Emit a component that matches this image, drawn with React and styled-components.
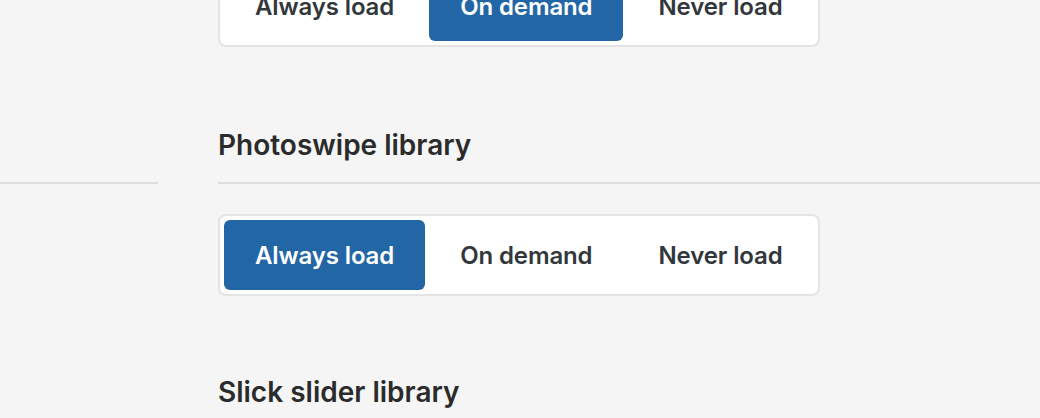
import styled, { createGlobalStyle } from "styled-components"

const GlobalStyle = createGlobalStyle`
  body {
    margin: 0;
    background: #f5f5f5;
    font-family: "Inter", "Noto Sans", sans-serif;
    overflow: hidden;
  }
`

const Page = styled.div`
  margin-top: -35px;
`

const Row = styled.div`
  display: grid;
  grid-template-columns: 158px 1fr;
  column-gap: 60px;
  margin-top: ${(p) => p.$top || 0}px;
`

const SideRule = styled.div`
  border-bottom: 2px solid #dddddd;
`

const Heading = styled.h2`
  margin: 0;
  padding-bottom: 20px;
  border-bottom: 2px solid #dddddd;
  font-size: 28px;
  line-height: 34px;
  font-weight: 600;
  color: #2b2b2b;
`

const Toggle = styled.div`
  grid-column: 2;
  display: inline-flex;
  justify-self: start;
  gap: 4px;
  padding: 4px;
  background: #ffffff;
  border: 2px solid #e4e4e4;
  border-radius: 8px;
`

const Choice = styled.button`
  height: 70px;
  padding: 0 31px;
  border: 0;
  border-radius: 6px;
  font-family: inherit;
  font-size: 24px;
  font-weight: 600;
  letter-spacing: -0.12px;
  cursor: pointer;
  background: ${(p) => (p.$active ? "#2266a5" : "transparent")};
  color: ${(p) => (p.$active ? "#ffffff" : "#32373c")};
`

const choices = [
  { id: "always", label: "Always load" },
  { id: "demand", label: "On demand" },
  { id: "never", label: "Never load" },
]

const LoadToggle = ({ active, top }) => (
  <Row $top={top}>
    <Toggle>
      {choices.map((c) => (
        <Choice key={c.id} $active={c.id === active}>
          {c.label}
        </Choice>
      ))}
    </Toggle>
  </Row>
)

const SectionHead = ({ title, top }) => (
  <Row $top={top}>
    <SideRule />
    <Heading>{title}</Heading>
  </Row>
)

const App = () => {
  return (
    <>
      <GlobalStyle />
      <Page>
        <LoadToggle active="demand" />
        <SectionHead title="Photoswipe library" top={81} />
        <LoadToggle active="always" top={30} />
        <SectionHead title="Slick slider library" top={79} />
        <LoadToggle active="demand" top={30} />
      </Page>
    </>
  )
}

export default App
